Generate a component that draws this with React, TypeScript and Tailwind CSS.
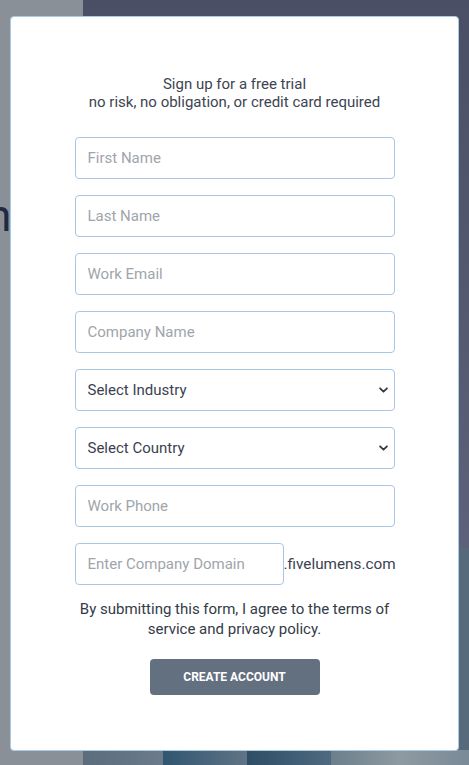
import { ChangeEvent, useState } from 'react';

const fieldClass =
  'block h-[42px] w-full rounded-[4px] border border-[#a9c6e4] bg-white px-3 text-[15px] text-[#3a4250] placeholder:text-[#a0a5ab] outline-none';

function Chevron() {
  return (
    <svg
      viewBox="0 0 16 16"
      className="pointer-events-none absolute right-[6px] top-1/2 h-[11px] w-[11px] -translate-y-1/2"
      fill="none"
      stroke="#343a40"
      strokeWidth="2.6"
      strokeLinecap="round"
      strokeLinejoin="round"
    >
      <path d="m3 5.5 5 5 5-5" />
    </svg>
  );
}

function SelectField({ label, options }: { label: string; options: string[] }) {
  const [value, setValue] = useState('');
  return (
    <div className="relative">
      <select
        value={value}
        onChange={(e: ChangeEvent<HTMLSelectElement>) => setValue(e.target.value)}
        className={`${fieldClass} appearance-none pr-8`}
      >
        <option value="">{label}</option>
        {options.map((o) => (
          <option key={o} value={o}>
            {o}
          </option>
        ))}
      </select>
      <Chevron />
    </div>
  );
}

export default function App() {
  return (
    <div
      className="relative h-[765px] w-[469px] overflow-hidden"
      style={{ fontFamily: 'Roboto, "Noto Sans", sans-serif' }}
    >
      {/* dimmed page behind the modal */}
      <div className="flex h-full w-full">
        <div className="flex w-[83px] flex-col bg-[#8a9098]">
          <div className="h-[194px]" />
          <span className="-ml-[13px] text-[44px] leading-[44px] text-[#1f2a44]">n</span>
        </div>
        <div className="flex flex-1 flex-col">
          <div className="h-[548px] bg-gradient-to-b from-[#4a4f65] to-[#5d6179]" />
          <div className="h-[202px] bg-[#566a7b]" />
          <div className="flex flex-1">
            <div className="w-[80px] bg-gradient-to-r from-[#5b6c7c] to-[#6b7b8a]" />
            <div className="w-[84px] bg-gradient-to-r from-[#2f5670] to-[#607486]" />
            <div className="w-[84px] bg-gradient-to-r from-[#2d4e66] to-[#4f6a80]" />
            <div className="flex-1 bg-gradient-to-r from-[#6c7f8c] via-[#8e9aa2] to-[#7a8a96]" />
          </div>
        </div>
      </div>

      {/* modal */}
      <div className="absolute left-[10px] top-[16px] flex h-[735px] w-[449px] flex-col items-center rounded-[4px] border border-[#a9cbe4] bg-white pt-[58px]">
        <p className="text-center text-[15px] leading-[18px] text-[#3d4451]">
          Sign up for a free trial
          <br />
          no risk, no obligation, or credit card required
        </p>

        <form className="mt-[26px] flex w-[320px] flex-col gap-4" onSubmit={(e) => e.preventDefault()}>
          <input className={fieldClass} placeholder="First Name" />
          <input className={fieldClass} placeholder="Last Name" />
          <input className={fieldClass} placeholder="Work Email" />
          <input className={fieldClass} placeholder="Company Name" />
          <SelectField label="Select Industry" options={['Technology', 'Healthcare', 'Finance']} />
          <SelectField label="Select Country" options={['United States', 'Canada', 'United Kingdom']} />
          <input className={fieldClass} placeholder="Work Phone" />
          <div className="flex items-center">
            <input className={`${fieldClass} !w-[209px] shrink-0`} placeholder="Enter Company Domain" />
            <span className="text-[15.3px] text-[#3a4250]">.fivelumens.com</span>
          </div>

          <p className="mt-[-2px] text-center text-[15px] leading-[20px] text-[#333b47]">
            By submitting this form, I agree to the terms of
            <br />
            service and privacy policy.
          </p>

          <div className="flex justify-center pt-1">
            <button
              type="submit"
              className="h-[36px] w-[170px] rounded-[4px] bg-[#637080] text-[12px] font-bold uppercase text-white"
            >
              Create Account
            </button>
          </div>
        </form>
      </div>
    </div>
  );
}
